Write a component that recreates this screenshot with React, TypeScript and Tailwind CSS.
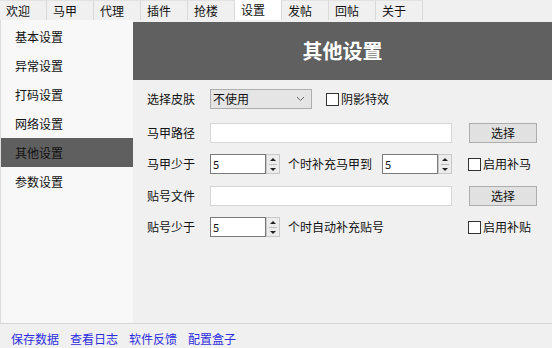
import React from "react";

const tabs = ["欢迎", "马甲", "代理", "插件", "抢楼", "设置", "发帖", "回帖", "关于"];
const menu = ["基本设置", "异常设置", "打码设置", "网络设置", "其他设置", "参数设置"];
const links = ["保存数据", "查看日志", "软件反馈", "配置盒子"];

function CheckBox({ label }: { label: string }) {
  return (
    <label className="flex items-center gap-[2px]">
      <span className="w-[13px] h-[13px] border border-[#333] bg-white" />
      <span>{label}</span>
    </label>
  );
}

function Spin({ value }: { value: string }) {
  return (
    <div className="flex h-[20px] w-[70px]">
      <div className="w-[56px] h-full border border-[#7a7a7a] bg-white pl-[2px] leading-[18px] text-[11px]">
        {value}
      </div>
      <div className="w-[14px] h-full border border-[#c8c8c8] bg-[#ececec] flex flex-col items-center justify-center gap-[3px]">
        <span className="w-0 h-0 border-l-[3px] border-r-[3px] border-b-[3px] border-l-transparent border-r-transparent border-b-[#222]" />
        <span className="w-[8px] h-px bg-[#bbb]" />
        <span className="w-0 h-0 border-l-[3px] border-r-[3px] border-t-[3px] border-l-transparent border-r-transparent border-t-[#222]" />
      </div>
    </div>
  );
}

function PickButton() {
  return (
    <button className="ml-[17px] w-[68px] h-[20px] border border-[#adadad] bg-[#e1e1e1] text-[12px] leading-[18px]">
      选择
    </button>
  );
}

export default function App() {
  return (
    <div
      className="w-[552px] h-[348px] bg-[#f0f0f0] text-[12px] text-[#111] flex flex-col overflow-hidden"
      style={{ fontFamily: '"Noto Sans CJK SC", "Noto Sans", sans-serif' }}
    >
      {/* tab strip */}
      <div className="flex h-[20px] shrink-0">
        {tabs.map((t) => (
          <div
            key={t}
            className={`w-[47px] h-[20px] pl-[6px] leading-[20px] border-r border-[#d9d9d9] ${
              t === "设置" ? "bg-white" : "bg-[#f0f0f0] border-t border-t-[#e3e3e3]"
            }`}
          >
            {t}
          </div>
        ))}
      </div>

      <div className="flex h-[303px] shrink-0 bg-[#f9f9f9] border-l border-[#dcdcdc]">
        {/* side menu */}
        <div className="w-[132px] pt-[2px] bg-[#f8f8f8]">
          {menu.map((m) => (
            <div
              key={m}
              className={`h-[29px] leading-[29px] pl-[14px] ${
                m === "其他设置" ? "bg-[#5f5f5f] text-[#111]" : ""
              }`}
            >
              {m}
            </div>
          ))}
        </div>

        {/* settings panel */}
        <div className="flex-1 flex flex-col bg-[#f0f0f0]">
          <div className="mt-[2px] h-[58px] bg-[#606060] flex items-center justify-center">
            <span className="text-white text-[20px] font-bold">其他设置</span>
          </div>

          <div className="pl-[14px]">
            <div className="mt-[9px] h-[20px] flex items-center">
              <span className="w-[63px]">选择皮肤</span>
              <div className="w-[102px] h-[20px] border border-[#adadad] bg-[#e5e5e5] flex items-center justify-between pl-[2px] pr-[6px]">
                <span>不使用</span>
                <svg width="9" height="6" viewBox="0 0 9 6">
                  <path d="M1 1 L4.5 4.5 L8 1" fill="none" stroke="#666" strokeWidth="1" />
                </svg>
              </div>
              <div className="ml-[14px]">
                <CheckBox label="阴影特效" />
              </div>
            </div>

            <div className="mt-[14px] h-[20px] flex items-center">
              <span className="w-[63px]">马甲路径</span>
              <div className="w-[242px] h-[20px] border border-[#d6d6d6] bg-white" />
              <PickButton />
            </div>

            <div className="mt-[11px] h-[20px] flex items-center">
              <span className="w-[63px]">马甲少于</span>
              <Spin value="5" />
              <span className="ml-[8px] w-[94px]">个时补充马甲到</span>
              <Spin value="5" />
              <div className="ml-[16px]">
                <CheckBox label="启用补马" />
              </div>
            </div>

            <div className="mt-[12px] h-[20px] flex items-center">
              <span className="w-[63px]">贴号文件</span>
              <div className="w-[242px] h-[20px] border border-[#d6d6d6] bg-white" />
              <PickButton />
            </div>

            <div className="mt-[11px] h-[20px] flex items-center">
              <span className="w-[63px]">贴号少于</span>
              <Spin value="5" />
              <span className="ml-[8px] w-[180px]">个时自动补充贴号</span>
              <CheckBox label="启用补贴" />
            </div>
          </div>
        </div>
      </div>

      {/* footer links */}
      <div className="flex-1 border-t border-[#d5d5d5] flex items-center gap-[11px] pl-[11px] pt-[5px]">
        {links.map((l) => (
          <span key={l} className="text-[#2d2de0]">
            {l}
          </span>
        ))}
      </div>
    </div>
  );
}
